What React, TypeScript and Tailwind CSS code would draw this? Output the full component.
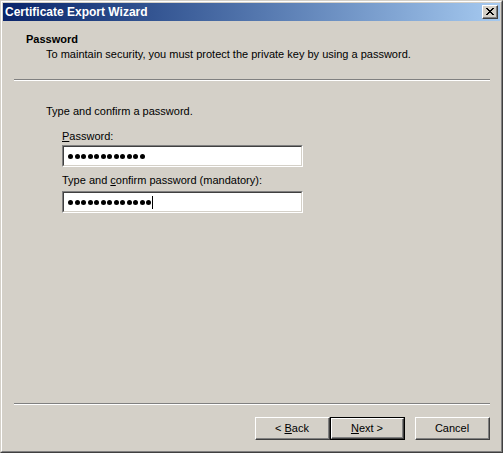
import React from "react";

function Dots({ n }: { n: number }) {
  return (
    <div className="flex items-center gap-[1.5px]">
      {Array.from({ length: n }).map((_, i) => (
        <span key={i} className="block w-[5px] h-[5px] rounded-full bg-black" />
      ))}
    </div>
  );
}

function Field({ n, caret }: { n: number; caret?: boolean }) {
  return (
    <div className="w-[241px] h-[22px] border-t border-l border-t-[#808080] border-l-[#808080] border-b border-r border-b-white border-r-white">
      <div className="h-full border-t border-l border-t-[#404040] border-l-[#404040] border-b border-r border-b-[#d4d0c8] border-r-[#d4d0c8] bg-white flex items-center pl-[4px]">
        <Dots n={n} />
        {caret && <span className="block w-[1px] h-[13px] bg-black ml-[1px]" />}
      </div>
    </div>
  );
}

function Btn({ children, def }: { children: React.ReactNode; def?: boolean }) {
  const inner = (
    <div className="h-full border-t border-l border-t-white border-l-white border-b border-r border-b-[#404040] border-r-[#404040]">
      <div className="h-full border-b border-r border-b-[#808080] border-r-[#808080] flex items-center justify-center">
        <span>{children}</span>
      </div>
    </div>
  );
  if (def) {
    return <div className="w-[75px] h-[23px] border border-black">{inner}</div>;
  }
  return <div className="w-[75px] h-[23px]">{inner}</div>;
}

export default function App() {
  return (
    <div className="w-[503px] h-[453px] bg-[#d4d0c8] text-black text-[11px] leading-[13px] font-['Liberation_Sans',Arial,sans-serif]">
      <div className="w-full h-full border-t border-l border-t-[#d4d0c8] border-l-[#d4d0c8] border-b border-r border-b-[#404040] border-r-[#404040]">
        <div className="w-full h-full border-t border-l border-t-white border-l-white border-b border-r border-b-[#808080] border-r-[#808080] p-[1px] flex flex-col">
          {/* Title bar */}
          <div className="h-[18px] flex items-center justify-between bg-gradient-to-r from-[#0a246a] to-[#a6caf0] pl-[2px] pr-[2px]">
            <span className="text-white font-bold text-[12px] leading-[14px]">Certificate Export Wizard</span>
            <div className="w-[16px] h-[14px] bg-[#d4d0c8] border-t border-l border-t-white border-l-white border-b border-r border-b-[#404040] border-r-[#404040]">
              <div className="w-full h-full border-b border-r border-b-[#808080] border-r-[#808080] flex items-center justify-center">
                <svg width="8" height="7" viewBox="0 0 8 7" shapeRendering="crispEdges">
                  <path d="M0 0h2v1h-2zM6 0h2v1h-2zM1 1h2v1h-2zM5 1h2v1h-2zM2 2h4v1h-4zM3 3h2v1h-2zM2 4h4v1h-4zM1 5h2v1h-2zM5 5h2v1h-2zM0 6h2v1h-2zM6 6h2v1h-2z" fill="#000" />
                </svg>
              </div>
            </div>
          </div>

          {/* Header */}
          <div className="pt-[12px] pl-[23px]">
            <div className="font-bold">Password</div>
            <div className="mt-[2px] pl-[20px]">To maintain security, you must protect the private key by using a password.</div>
          </div>
          <div className="mt-[18px] ml-[11px] w-[476px] h-[2px] border-t border-t-[#808080] border-b border-b-white" />

          {/* Body */}
          <div className="flex-1 pl-[43px]">
            <div className="mt-[24px]">Type and confirm a password.</div>
            <div className="pl-[16px]">
              <div className="mt-[12px]"><u>P</u>assword:</div>
              <div className="mt-[2px]"><Field n={12} /></div>
              <div className="mt-[7px]">Type and <u>c</u>onfirm password (mandatory):</div>
              <div className="mt-[4px]"><Field n={13} caret /></div>
            </div>
          </div>

          {/* Bottom */}
          <div className="ml-[11px] w-[476px] h-[2px] border-t border-t-[#808080] border-b border-b-white" />
          <div className="flex mt-[12px] mb-[10px] pl-[252px]">
            <Btn>&lt; <u>B</u>ack</Btn>
            <Btn def><u>N</u>ext &gt;</Btn>
            <div className="ml-[10px]"><Btn>Cancel</Btn></div>
          </div>
        </div>
      </div>
    </div>
  );
}
